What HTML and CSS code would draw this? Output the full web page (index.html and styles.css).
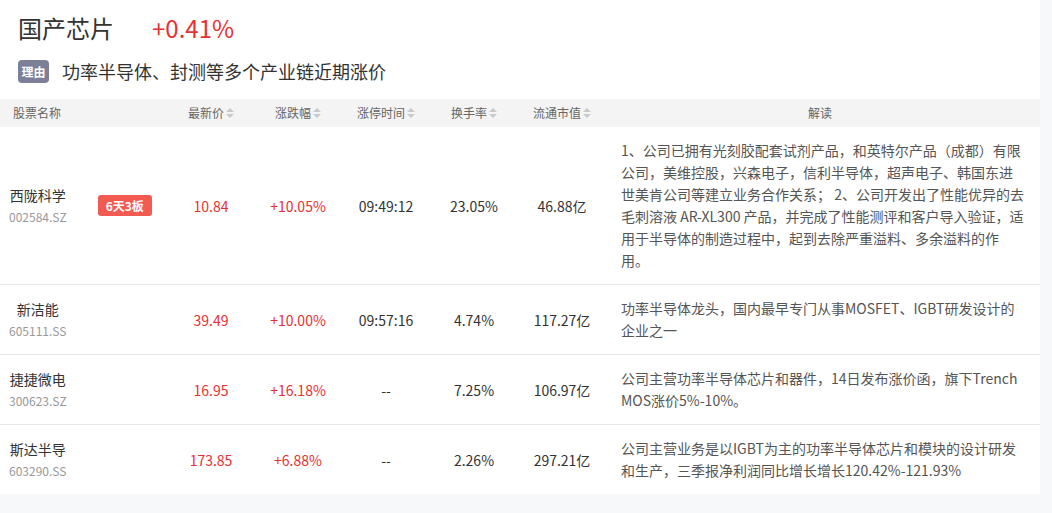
FILE: index.html
```html
<!DOCTYPE html>
<html lang="zh">
<head>
<meta charset="utf-8">
<title>国产芯片</title>
<link rel="stylesheet" href="styles.css">
</head>
<body>
<div class="panel">
  <div class="title-row">
    <span class="title">国产芯片</span>
    <span class="change">+0.41%</span>
  </div>
  <div class="reason-row">
    <span class="tag">理由</span>
    <span class="reason">功率半导体、封测等多个产业链近期涨价</span>
  </div>
  <div class="table">
    <div class="row head">
      <div class="cell c-name">股票名称</div>
      <div class="cell c-num">最新价<span class="sort"><i class="up"></i><i class="down"></i></span></div>
      <div class="cell c-num">涨跌幅<span class="sort"><i class="up"></i><i class="down"></i></span></div>
      <div class="cell c-num">涨停时间<span class="sort"><i class="up"></i><i class="down"></i></span></div>
      <div class="cell c-num">换手率<span class="sort"><i class="up"></i><i class="down"></i></span></div>
      <div class="cell c-num">流通市值<span class="sort"><i class="up"></i><i class="down"></i></span></div>
      <div class="cell head-desc">解读</div>
    </div>

    <div class="row">
      <div class="cell c-name">
        <div class="stock"><span class="sname">西陇科学</span><span class="code">002584.SZ</span></div>
        <span class="badge">6天3板</span>
      </div>
      <div class="cell c-num red">10.84</div>
      <div class="cell c-num red">+10.05%</div>
      <div class="cell c-num">09:49:12</div>
      <div class="cell c-num">23.05%</div>
      <div class="cell c-num">46.88亿</div>
      <div class="cell c-desc">1、公司已拥有光刻胶配套试剂产品，和英特尔产品（成都）有限公司，美维控股，兴森电子，信利半导体，超声电子、韩国东进世美肯公司等建立业务合作关系； 2、公司开发出了性能优异的去毛刺溶液 AR-XL300 产品，并完成了性能测评和客户导入验证，适用于半导体的制造过程中，起到去除严重溢料、多余溢料的作用。</div>
    </div>

    <div class="row">
      <div class="cell c-name">
        <div class="stock"><span class="sname">新洁能</span><span class="code">605111.SS</span></div>
      </div>
      <div class="cell c-num red">39.49</div>
      <div class="cell c-num red">+10.00%</div>
      <div class="cell c-num">09:57:16</div>
      <div class="cell c-num">4.74%</div>
      <div class="cell c-num">117.27亿</div>
      <div class="cell c-desc">功率半导体龙头，国内最早专门从事MOSFET、IGBT研发设计的企业之一</div>
    </div>

    <div class="row">
      <div class="cell c-name">
        <div class="stock"><span class="sname">捷捷微电</span><span class="code">300623.SZ</span></div>
      </div>
      <div class="cell c-num red">16.95</div>
      <div class="cell c-num red">+16.18%</div>
      <div class="cell c-num">--</div>
      <div class="cell c-num">7.25%</div>
      <div class="cell c-num">106.97亿</div>
      <div class="cell c-desc">公司主营功率半导体芯片和器件，14日发布涨价函，旗下Trench MOS涨价5%-10%。</div>
    </div>

    <div class="row last">
      <div class="cell c-name">
        <div class="stock"><span class="sname">斯达半导</span><span class="code">603290.SS</span></div>
      </div>
      <div class="cell c-num red">173.85</div>
      <div class="cell c-num red">+6.88%</div>
      <div class="cell c-num">--</div>
      <div class="cell c-num">2.26%</div>
      <div class="cell c-num">297.21亿</div>
      <div class="cell c-desc">公司主营业务是以IGBT为主的功率半导体芯片和模块的设计研发和生产，三季报净利润同比增长增长120.42%-121.93%</div>
    </div>
  </div>
</div>
</body>
</html>
```

FILE: styles.css
```css
* { box-sizing: border-box; }

html, body {
  margin: 0;
  padding: 0;
  background: #f7f8fa;
  font-family: "Noto Sans CJK SC", "Noto Sans", sans-serif;
  color: #333;
}

.panel {
  width: 1040px;
  background: #fff;
}

.title-row {
  display: flex;
  align-items: center;
  padding: 10px 0 0 18px;
  height: 46px;
}

.title {
  font-size: 24px;
  line-height: 36px;
  color: #333;
}

.change {
  font-size: 24px;
  line-height: 36px;
  color: #e93030;
  margin-left: 38px;
}

.reason-row {
  display: flex;
  align-items: center;
  padding-left: 18px;
  margin-top: 12px;
  height: 26px;
}

.tag {
  display: inline-flex;
  align-items: center;
  justify-content: center;
  width: 31px;
  height: 23px;
  border-radius: 4px;
  background: #7b8098;
  color: #fff;
  font-size: 12px;
  font-weight: bold;
}

.reason {
  margin-left: 13px;
  font-size: 18px;
  color: #333;
}

.table {
  margin-top: 15px;
}

.row {
  display: grid;
  grid-template-columns: 168px 86px 88px 88px 88px 88px 1fr;
  align-items: center;
  border-bottom: 1px solid #e8e8e8;
}

.row.last { border-bottom: none; }

.row.head {
  background: #f4f4f4;
  height: 28px;
  border-bottom: none;
}

.cell {
  font-size: 14px;
}

.head .cell {
  font-size: 12px;
  line-height: 18px;
  color: #666;
  display: flex;
  align-items: center;
}

.head .c-name { padding-left: 13px; }
.head .c-num { justify-content: center; }
.head .head-desc { justify-content: center; padding: 0 21px 0 15px; }

.sort {
  display: inline-flex;
  flex-direction: column;
  margin-left: 2px;
  gap: 2px;
}

.sort i {
  display: block;
  width: 0;
  height: 0;
  border-left: 4px solid transparent;
  border-right: 4px solid transparent;
}

.sort .up { border-bottom: 4px solid #c9c9c9; }
.sort .down { border-top: 4px solid #c9c9c9; }

.c-name {
  display: flex;
  align-items: center;
  padding-left: 9px;
}

.stock {
  display: inline-flex;
  flex-direction: column;
  align-items: center;
}

.sname {
  font-size: 14px;
  line-height: 21px;
  color: #333;
}

.code {
  font-size: 12px;
  line-height: 21px;
  color: #999;
}

.badge {
  margin-left: 31px;
  height: 21px;
  padding: 0 8px;
  display: inline-flex;
  align-items: center;
  border-radius: 3px;
  background: #f25a52;
  color: #fff;
  font-size: 12px;
  font-weight: bold;
}

.c-num {
  text-align: center;
  color: #333;
}

.c-num.red { color: #e93030; }

.c-desc {
  padding: 12px 15px 13px;
  font-size: 14px;
  line-height: 22px;
  color: #555;
}
```
